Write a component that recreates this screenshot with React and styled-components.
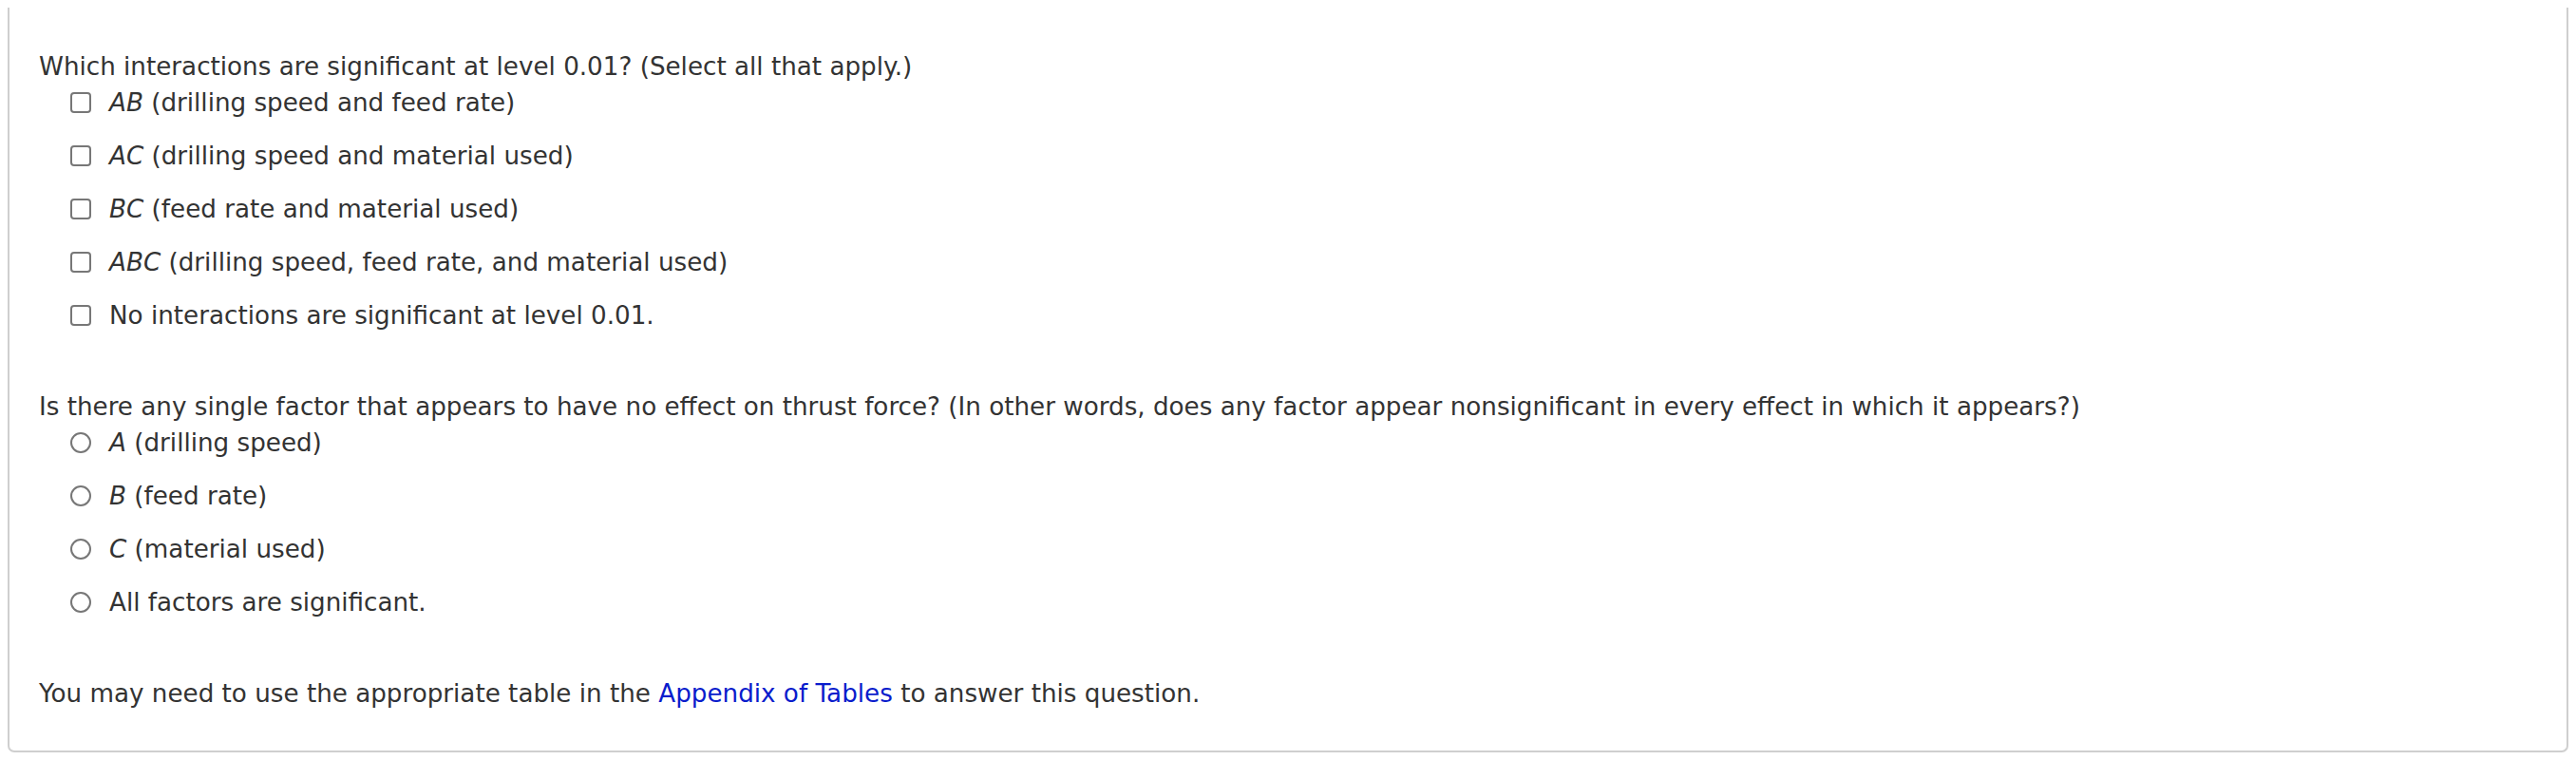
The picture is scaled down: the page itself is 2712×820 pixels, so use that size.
import React from "react";
import styled, { createGlobalStyle } from "styled-components";

const GlobalStyle = createGlobalStyle`
    body {
        margin: 8px;
        background: #fff;
        font-family: "DejaVu Sans", Verdana, sans-serif;
        color: #333;
    }
`

const questions = [
    {
        kind: "checkbox",
        prompt: "Which interactions are significant at level 0.01? (Select all that apply.)",
        options: [
            { tag: "AB", text: " (drilling speed and feed rate)" },
            { tag: "AC", text: " (drilling speed and material used)" },
            { tag: "BC", text: " (feed rate and material used)" },
            { tag: "ABC", text: " (drilling speed, feed rate, and material used)" },
            { text: "No interactions are significant at level 0.01." },
        ],
    },
    {
        kind: "radio",
        prompt: "Is there any single factor that appears to have no effect on thrust force? (In other words, does any factor appear nonsignificant in every effect in which it appears?)",
        options: [
            { tag: "A", text: " (drilling speed)" },
            { tag: "B", text: " (feed rate)" },
            { tag: "C", text: " (material used)" },
            { text: "All factors are significant." },
        ],
    },
]

const App = () => {
    return (
        <React.Fragment>
            <GlobalStyle />
            <Card>
                {questions.map((q, qi) => (
                    <Question key={qi}>
                        <Prompt>{q.prompt}</Prompt>
                        <Options>
                            {q.options.map((o, oi) => (
                                <Option key={oi}>
                                    <Box type={q.kind} name={"q" + qi} round={q.kind === "radio"} />
                                    <span>
                                        {o.tag && <Var>{o.tag}</Var>}
                                        {o.text}
                                    </span>
                                </Option>
                            ))}
                        </Options>
                    </Question>
                ))}
                <Footer>
                    You may need to use the appropriate table in the <Link href="#">Appendix of Tables</Link> to answer this question.
                </Footer>
            </Card>
        </React.Fragment>
    )
}

const Card = styled.div`
    border: 2px solid #cfcfcf;
    border-top: none;
    border-radius: 0 0 7px 7px;
    padding: 43px 31px 41px 31px;
    font-size: 26.2px;
    line-height: 38px;
`
const Question = styled.div`
    margin-bottom: 58px;
`
const Prompt = styled.div`
`
const Options = styled.div`
    display: flex;
    flex-direction: column;
    gap: 18px;
    padding-left: 33px;
`
const Option = styled.label`
    display: flex;
    align-items: center;
    gap: 19px;
`
const Box = styled.input`
    appearance: none;
    margin: 0;
    width: 22px;
    height: 22px;
    border: 2px solid #777;
    border-radius: ${(props) => (props.round ? "50%" : "4px")};
    background: #fff;
    flex-shrink: 0;
`
const Var = styled.i`
    font-style: italic;
`
const Footer = styled.div`
`
const Link = styled.a`
    color: #0a1ccc;
    text-decoration: none;
`

export default App;
